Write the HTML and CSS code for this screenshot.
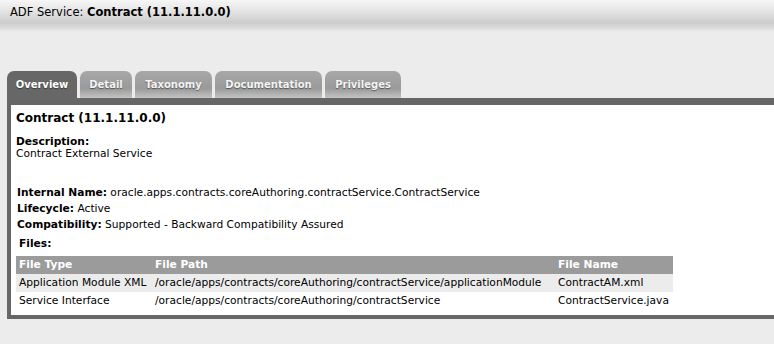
FILE: index.html
```html
<!DOCTYPE html>
<html lang="en">
<head>
    <meta charset="UTF-8">
    <title>ADF Service: Contract</title>
    <link rel="stylesheet" href="styles.css">
</head>
<body>
    <div class="page-header">
        ADF Service: <b>Contract (11.1.11.0.0)</b>
    </div>

    <div class="tabs">
        <div class="tab tab-overview active">Overview</div>
        <div class="tab tab-detail">Detail</div>
        <div class="tab tab-taxonomy">Taxonomy</div>
        <div class="tab tab-docs">Documentation</div>
        <div class="tab tab-privileges">Privileges</div>
    </div>

    <div class="panel">
        <div class="panel-body">
            <h1 class="title">Contract (11.1.11.0.0)</h1>

            <div class="description">
                <div class="label">Description:</div>
                <div>Contract External Service</div>
            </div>

            <div class="props">
                <div class="prop"><b>Internal Name:</b> oracle.apps.contracts.coreAuthoring.contractService.ContractService</div>
                <div class="prop"><b>Lifecycle:</b> Active</div>
                <div class="prop"><b>Compatibility:</b> Supported - Backward Compatibility Assured</div>
            </div>

            <div class="files-label">Files:</div>

            <table class="files">
                <colgroup>
                    <col class="col-type">
                    <col class="col-path">
                    <col class="col-name">
                </colgroup>
                <tr>
                    <th>File Type</th>
                    <th>File Path</th>
                    <th>File Name</th>
                </tr>
                <tr class="odd">
                    <td>Application Module XML</td>
                    <td>/oracle/apps/contracts/coreAuthoring/contractService/applicationModule</td>
                    <td>ContractAM.xml</td>
                </tr>
                <tr>
                    <td>Service Interface</td>
                    <td>/oracle/apps/contracts/coreAuthoring/contractService</td>
                    <td>ContractService.java</td>
                </tr>
            </table>
        </div>
    </div>
</body>
</html>
```

FILE: styles.css
```css
html, body {
    overflow: hidden;
}
body {
    margin: 0;
    background-color: #ececec;
    font-family: "DejaVu Sans", Verdana, sans-serif;
    font-size: 8pt;
    color: #000;
}
.page-header {
    height: 32px;
    padding-left: 10px;
    font-size: 11.5px;
    line-height: 25px;
    background: linear-gradient(to bottom, #f7f7f7 0, #e6e6e6 10px, #cccccc 23px, #d8d8d8 27px, #ececec 32px);
}
.tabs {
    display: flex;
    gap: 3px;
    margin: 39px 0 0 7px;
}
.tab {
    height: 26px;
    padding-top: 1px;
    line-height: 26px;
    text-align: center;
    font-size: 10px;
    font-weight: bold;
    color: #f4f4f4;
    text-shadow: 0 1px 1px rgba(0, 0, 0, 0.45);
    border-radius: 7px 7px 0 0;
    background: linear-gradient(to bottom, #a8a8a8 0, #9a9a9a 65%, #c4c4c4 100%);
}
.tab.active {
    color: #fff;
    background: #676767;
}
.tab-overview { width: 70px; }
.tab-detail { width: 52px; }
.tab-taxonomy { width: 77px; }
.tab-docs { width: 107px; }
.tab-privileges { width: 76px; }
.panel {
    width: 820px;
    margin-left: 7px;
    border: 4px solid #676767;
    border-top-width: 7px;
    background-color: #fff;
}
.panel-body {
    padding: 5px;
}
.title {
    margin: 0;
    font-size: 12px;
    line-height: 16px;
}
.description {
    margin-top: 10px;
    line-height: 12px;
}
.label {
    font-weight: bold;
}
.props {
    margin-top: 25px;
    padding-left: 1px;
    line-height: 16px;
}
.files-label {
    margin-top: 3px;
    padding-left: 3px;
    line-height: 16px;
    font-weight: bold;
}
.files {
    margin-top: 4px;
    border-collapse: collapse;
    width: 657px;
}
.col-type { width: 136px; }
.col-path { width: 403px; }
.col-name { width: 118px; }
.files th, .files td {
    height: 18px;
    padding: 0 3px;
    text-align: left;
    white-space: nowrap;
    line-height: 18px;
}
.files th {
    background-color: #9b9b9b;
    color: #fff;
}
.files tr.odd td {
    background-color: #ececec;
}
```
